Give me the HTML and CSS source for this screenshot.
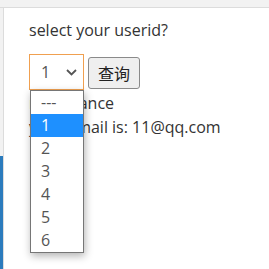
FILE: index.html
```html
<!DOCTYPE html>
<html>
<head>
<meta charset="utf-8">
<link rel="stylesheet" href="styles.css">
</head>
<body>
<div class="frame">
  <div class="topbar"></div>
  <div class="main">
    <div class="sidebar"><div class="sidebar-accent"></div></div>
    <div class="content">
      <p class="question">select your userid?</p>
      <div class="form-row">
        <div class="picker">
          <div class="select">
            <span class="select-value">1</span>
            <svg class="chevron" width="11" height="7" viewBox="0 0 11 7"><path d="M1 1 L5.5 5.5 L10 1" fill="none" stroke="#555" stroke-width="1.8"/></svg>
          </div>
          <ul class="dropdown">
            <li class="option">---</li>
            <li class="option selected">1</li>
            <li class="option">2</li>
            <li class="option">3</li>
            <li class="option">4</li>
            <li class="option">5</li>
            <li class="option">6</li>
          </ul>
        </div>
        <button class="query">查询</button>
      </div>
      <p class="line">my balance</p>
      <p class="line">your email is: 11@qq.com</p>
    </div>
  </div>
</div>
</body>
</html>
```
FILE: styles.css
```css
html, body {
  margin: 0;
  padding: 0;
  background: #fff;
}
.frame {
  width: 269px;
  height: 269px;
  display: flex;
  flex-direction: column;
  overflow: hidden;
  font-family: "Open Sans", "Noto Sans CJK SC", sans-serif;
  font-size: 16px;
  line-height: 24px;
  color: #333;
}
.topbar {
  height: 7px;
  background: #f2f2f2;
  border-bottom: 1px solid #dcdcdc;
  flex: none;
}
.main {
  flex: 1;
  display: flex;
}
.sidebar {
  width: 3px;
  background: #f2f2f2;
  border-right: 1px solid #dcdcdc;
  display: flex;
  flex-direction: column;
  justify-content: flex-end;
}
.sidebar-accent {
  height: 113px;
  background: #2b7bbd;
}
.content {
  flex: 1;
  padding-left: 25px;
}
.question {
  margin: 10px 0 12px;
}
.form-row {
  display: flex;
  align-items: center;
  gap: 4px;
  margin-bottom: 1px;
}
.picker {
  position: relative;
}
.select {
  width: 53px;
  height: 34px;
  border: 1px solid #f0a050;
  background: #fff;
  display: flex;
  align-items: center;
  justify-content: space-between;
  padding: 0 6px 0 11px;
  box-sizing: border-box;
  width: 55px;
  height: 36px;
  color: #555;
}
.chevron {
  display: block;
}
.query {
  margin-top: 1px;
  width: 52px;
  height: 32px;
  background: #efefef;
  border: 1px solid #8a8a8a;
  border-radius: 3px;
  font-family: "Noto Sans CJK SC", sans-serif;
  font-size: 16px;
  color: #222;
  padding: 0;
}
.dropdown {
  position: absolute;
  left: 1px;
  top: 36px;
  width: 54px;
  box-sizing: border-box;
  margin: 0;
  padding: 0;
  list-style: none;
  background: #fff;
  border: 1px solid #767676;
  box-shadow: 1px 3px 8px rgba(0, 0, 0, 0.3);
  z-index: 2;
}
.option {
  height: 23px;
  line-height: 23px;
  padding-left: 10px;
  color: #555;
}
.option.selected {
  background: #1e90ff;
  color: #fff;
}
.line {
  margin: 0;
}
```
